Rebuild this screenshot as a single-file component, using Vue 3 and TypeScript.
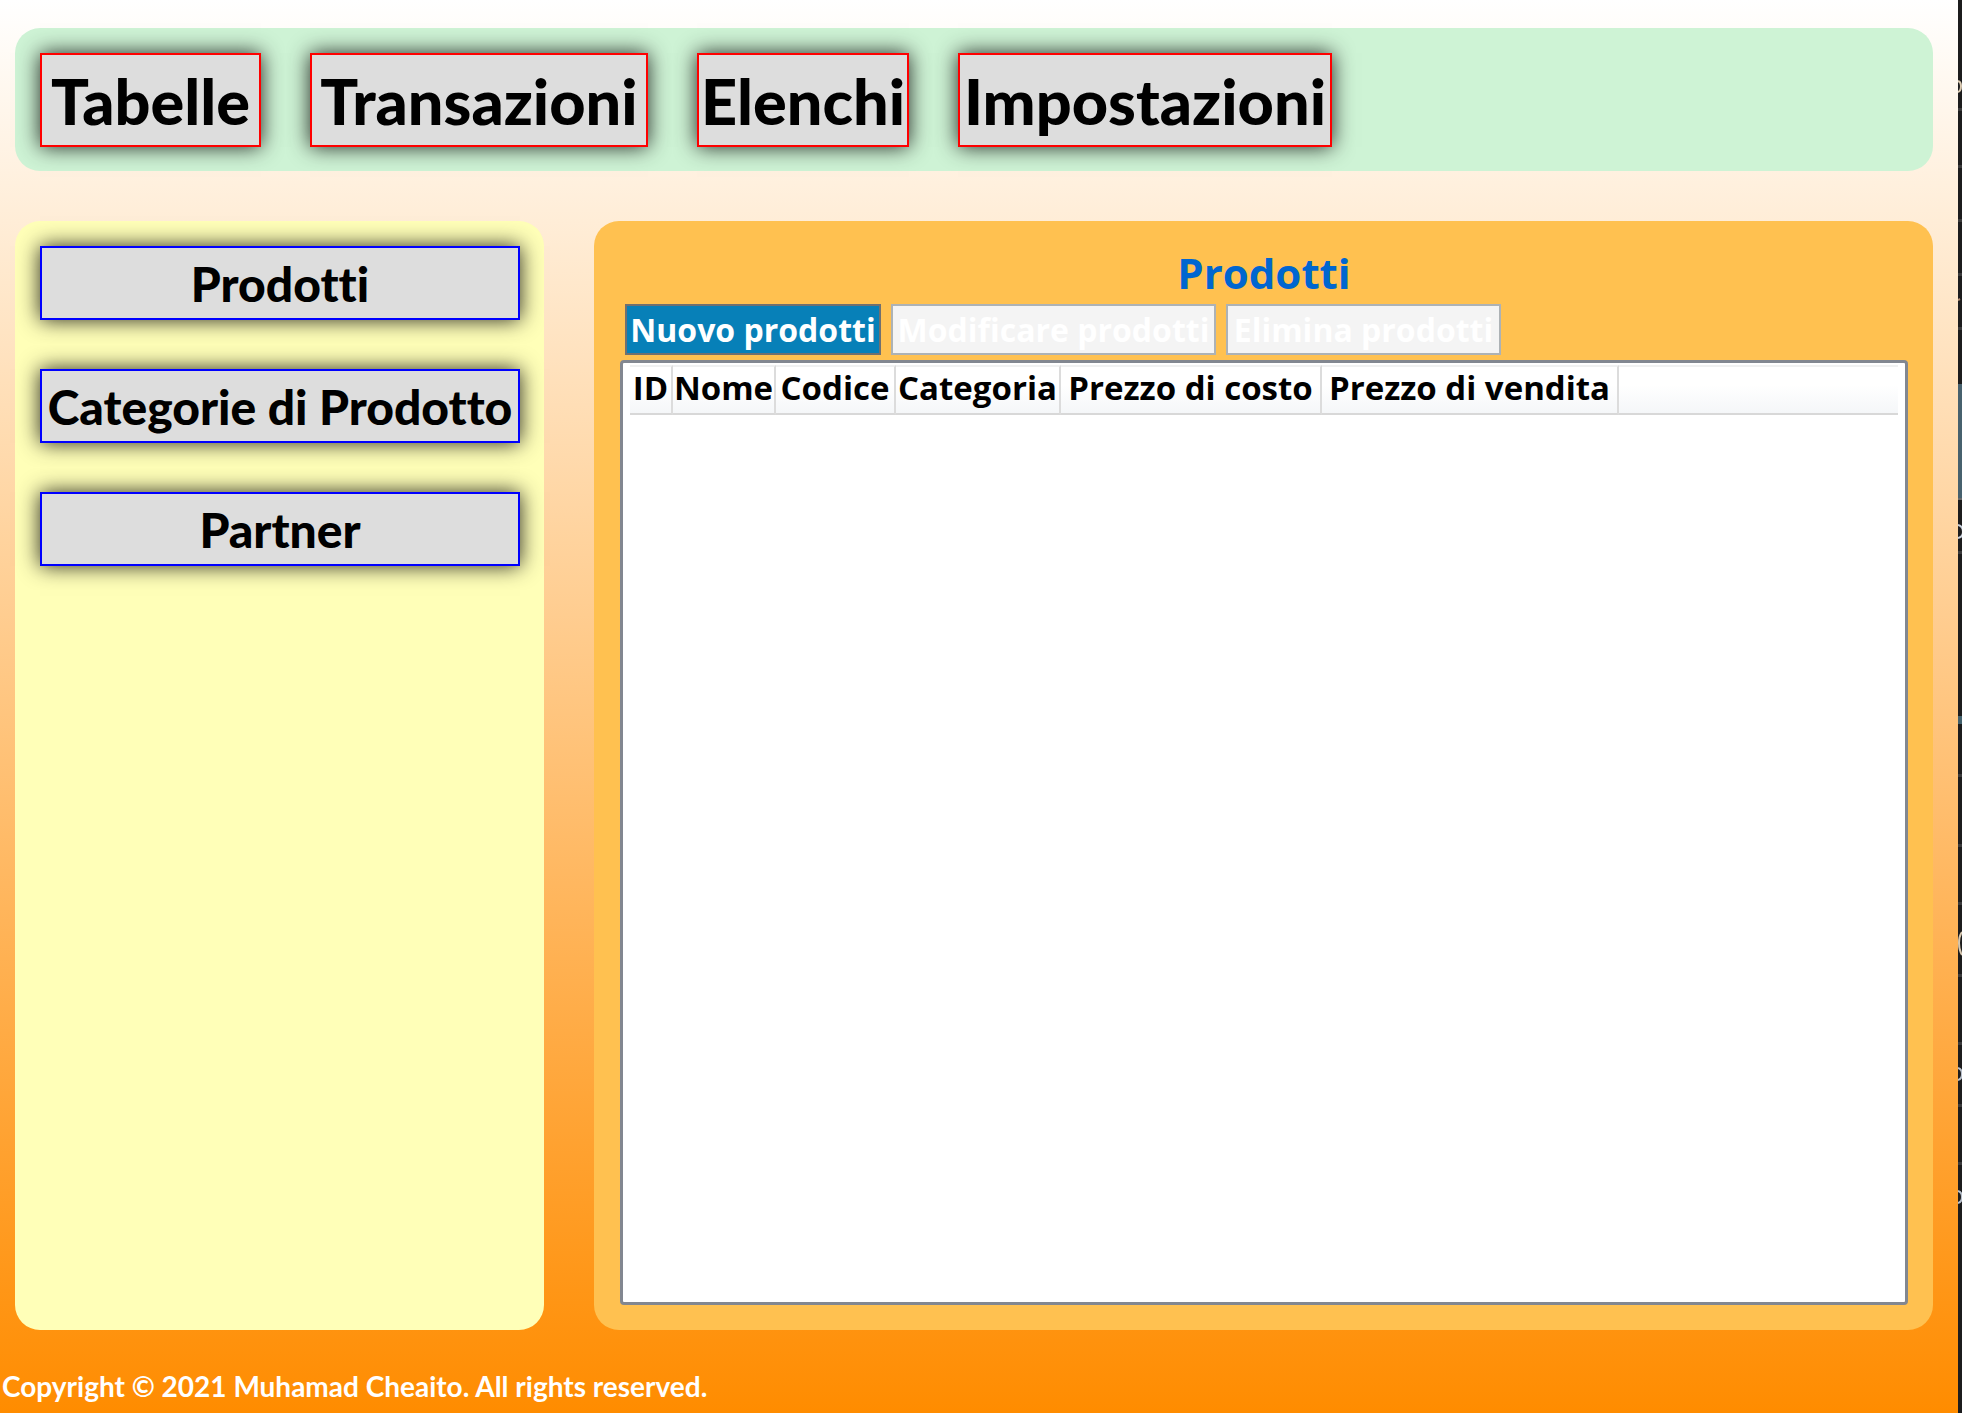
<script setup lang="ts">
import { ref } from 'vue'

interface Column {
  label: string
  width: number
}

const sections: string[] = ['Tabelle', 'Transazioni', 'Elenchi', 'Impostazioni']
const tables: string[] = ['Prodotti', 'Categorie di Prodotto', 'Partner']
const current = ref(tables[0])

const columns: Column[] = [
  { label: 'ID', width: 43 },
  { label: 'Nome', width: 103 },
  { label: 'Codice', width: 120 },
  { label: 'Categoria', width: 165 },
  { label: 'Prezzo di costo', width: 261 },
  { label: 'Prezzo di vendita', width: 297 },
]

const stripLines: number[] = [108, 165, 219, 273, 327, 551, 774, 844, 902, 974, 1042, 1104, 1162]
</script>

<template>
  <div class="desktop">
    <div class="window">
      <nav class="sections">
        <button v-for="s in sections" :key="s" type="button" :class="['section', s.toLowerCase()]">{{ s }}</button>
      </nav>
      <div class="body">
        <aside class="sidebar">
          <button v-for="t in tables" :key="t" type="button" class="entry" @click="current = t">{{ t }}</button>
        </aside>
        <main class="content">
          <h1 class="title">{{ current }}</h1>
          <div class="toolbar">
            <button type="button" class="action create">Nuovo prodotti</button>
            <button type="button" class="action edit" disabled>Modificare prodotti</button>
            <button type="button" class="action remove" disabled>Elimina prodotti</button>
          </div>
          <div class="list">
            <table class="grid">
              <colgroup>
                <col v-for="c in columns" :key="c.label" :style="{ width: c.width + 'px' }" />
                <col />
              </colgroup>
              <thead>
                <tr>
                  <th v-for="c in columns" :key="c.label" scope="col">{{ c.label }}</th>
                  <td></td>
                </tr>
              </thead>
            </table>
          </div>
        </main>
      </div>
      <footer class="footer">Copyright © 2021 Muhamad Cheaito. All rights reserved.</footer>
    </div>
    <div class="strip" aria-hidden="true">
      <svg width="4" height="1413" viewBox="0 0 4 1413">
        <rect v-for="y in stripLines" :key="y" x="0" :y="y" width="4" height="3" fill="#3a3a3b" />
        <rect x="0" y="384" width="4" height="115" fill="#47616e" />
        <rect x="0" y="498" width="4" height="2" fill="#6a6a6a" />
        <rect x="0" y="716" width="4" height="8" fill="#41606c" />
        <g fill="none" stroke-width="2">
          <path d="M0 81 Q3 82 3 86 Q3 91 0 92" stroke="#d8c8b0" />
          <path d="M0 300 L2 299" stroke="#b08a70" />
          <path d="M0 525 Q5 526 5 532 Q5 537 0 538" stroke="#c8d0dc" />
          <path d="M4 932 Q1 936 1 943 Q1 950 4 955" stroke="#d8c8b0" />
          <path d="M0 1068 Q4 1069 4 1074 Q4 1079 0 1080" stroke="#b8c0cc" />
          <path d="M0 1191 Q4 1192 4 1197 Q4 1202 0 1203" stroke="#b8c0cc" />
        </g>
      </svg>
    </div>
  </div>
</template>

<style>
body {
  margin: 0;
}
</style>

<style scoped>
.desktop {
  display: flex;
  min-height: 100vh;
  font-variant-ligatures: none;
}

.window {
  flex: 1;
  min-width: 0;
  display: flex;
  flex-direction: column;
  box-sizing: border-box;
  padding-top: 28px;
  background: linear-gradient(#ffffff, #ff8c00);
}

.strip {
  position: relative;
  width: 4px;
  background: #1c1c1d;
  overflow: hidden;
}

.strip svg {
  position: absolute;
  top: 0;
  left: 0;
}

button {
  box-sizing: border-box;
  margin: 0;
  padding: 0;
  white-space: nowrap;
  font-variant-ligatures: none;
}

.sections {
  display: flex;
  gap: 49px;
  margin: 0 25px 0 15px;
  padding: 25px 25px 24px;
  border-radius: 25px;
  background: #cef3d5;
}

.section,
.entry {
  background: #dddddd;
  color: #000000;
  font-family: "Comic Sans MS", Lato, sans-serif;
  font-weight: 900;
  box-shadow: 0 0 20px rgba(0, 0, 0, 0.85);
}

.section {
  height: 94px;
  border: 2px solid #ff0000;
  font-size: 63px;
}

.tabelle {
  width: 221px;
}

.transazioni {
  width: 338px;
}

.elenchi {
  width: 212px;
}

.impostazioni {
  width: 374px;
}

.body {
  flex: 1;
  display: flex;
  gap: 50px;
  margin: 50px 25px 0 15px;
}

.sidebar {
  display: flex;
  flex-direction: column;
  gap: 49px;
  box-sizing: border-box;
  width: 529px;
  padding: 25px 24px 25px 25px;
  border-radius: 25px;
  background: #ffffb8;
}

.entry {
  height: 74px;
  border: 2px solid #0000ff;
  font-size: 48px;
}

.content {
  flex: 1;
  min-width: 0;
  display: flex;
  flex-direction: column;
  box-sizing: border-box;
  padding: 25px 25px 25px 26px;
  border-radius: 25px;
  background: #ffc150;
  font-family: "Trebuchet MS", "Open Sans", sans-serif;
}

.title {
  margin: 0 0 4px;
  font-size: 42px;
  line-height: 54px;
  font-weight: 700;
  text-align: center;
  color: #0066d0;
}

.toolbar {
  display: flex;
  gap: 10px;
  margin: 0 0 5px 5px;
}

.action {
  height: 51px;
  border: 2px solid #707070;
  background: #0780b8;
  color: #ffffff;
  font-family: inherit;
  font-size: 32px;
  font-weight: 700;
}

.action:disabled {
  border-color: #adb2b5;
  background: #f4f4f4;
}

.create {
  width: 256px;
}

.edit {
  width: 325px;
}

.remove {
  width: 275px;
}

.list {
  flex: 1;
  padding: 2px 7px;
  border: 3px solid #828790;
  border-radius: 4px;
  background: #ffffff;
}

.grid {
  width: 100%;
  table-layout: fixed;
  border-collapse: separate;
  border-spacing: 0;
  background: linear-gradient(#ffffff 40%, #f4f6f8);
}

.grid th,
.grid td {
  box-sizing: border-box;
  height: 50px;
  padding: 0 0 4px;
  border-top: 2px solid #f0f1f1;
  border-bottom: 2px solid #d8d8d8;
}

.grid th {
  border-right: 2px solid #dcdcdc;
  font-size: 33px;
  line-height: 42px;
  font-weight: 700;
  text-align: center;
  white-space: nowrap;
}

.footer {
  padding: 36px 2px 7px;
  color: #ffffff;
  font-family: "Comic Sans MS", Lato, sans-serif;
  font-size: 28px;
  line-height: 40px;
  font-weight: 700;
}
</style>
